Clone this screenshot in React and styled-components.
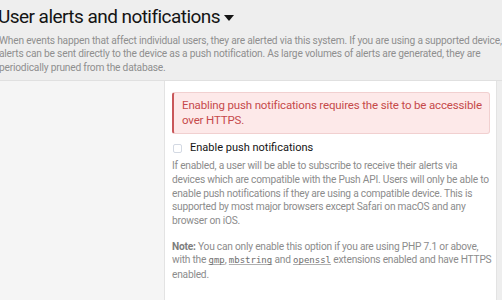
import React from "react";
import styled, { createGlobalStyle } from "styled-components";

const Global = createGlobalStyle`
  html, body { margin: 0; padding: 0; background: #eeeeee; overflow: hidden; }
  body { font-family: Roboto, "Noto Sans", sans-serif; }
`;

const Page = styled.div`
  width: 504px;
  margin-left: -2px;
  height: 300px;
  display: flex;
  flex-direction: column;
`;

const Header = styled.div`
  padding: 5px 0 0 0;
`;

const Title = styled.h1`
  margin: 0;
  font-weight: 400;
  font-size: 19px;
  letter-spacing: -0.55px;
  line-height: 24px;
  color: #141414;
  display: flex;
  align-items: center;
  gap: 4px;
  white-space: nowrap;
`;

const Caret = styled.span`
  width: 0;
  height: 0;
  border-left: 5px solid transparent;
  border-right: 5px solid transparent;
  border-top: 6px solid #141414;
  margin-top: 1px;
`;

const Desc = styled.p`
  margin: 5px 0 0 1px;
  font-size: 10.2px;
  letter-spacing: -0.2px;
  line-height: 13.4px;
  color: #8f8f8f;
  white-space: nowrap;
`;

const Form = styled.div`
  margin-top: 6px;
  display: grid;
  grid-template-columns: 166px 333px;
  border-top: 1px solid #e0e0e0;
  flex: 1;
`;

const LeftCol = styled.div`
  background: #f5f5f5;
`;

const RightCol = styled.div`
  background: #fff;
  border-left: 1px solid #e3e3e3;
  border-right: 1px solid #e3e3e3;
  padding: 11px 6px 0 7px;
`;

const Alert = styled.div`
  background: #fde9e9;
  border: 1px solid #f1d0d0;
  border-left: 2px solid #c9575a;
  border-radius: 3px;
  color: #c6494b;
  font-size: 11.5px;
  letter-spacing: -0.15px;
  line-height: 15px;
  padding: 5px 8px 5px 8px;
  white-space: nowrap;
`;

const CheckRow = styled.label`
  display: flex;
  align-items: center;
  gap: 8px;
  margin-top: 7px;
  font-size: 11px;
  line-height: 14px;
  color: #141414;
  padding-left: 1px;
`;

const Box = styled.span`
  width: 7px;
  height: 7px;
  border: 1px solid #d3d9e3;
  border-radius: 2px;
  background: #fff;
`;

const Help = styled.p`
  margin: ${(p) => p.$mt || 0}px 0 0 0;
  font-size: 10.2px;
  letter-spacing: -0.22px;
  line-height: 13.7px;
  color: #8c8c8c;
  white-space: nowrap;
`;

const Strong = styled.b`
  font-weight: 700;
  color: #7d7d7d;
`;

const Code = styled.code`
  font-family: "DejaVu Sans Mono", "Liberation Mono", monospace;
  font-size: 9px;
  letter-spacing: 0;
  color: #6d6d6d;
  text-decoration: underline;
  text-decoration-color: #b0b0b0;
`;

export default function App() {
  return (
    <>
      <Global />
      <Page>
        <Header>
          <Title>
            User alerts and notifications <Caret />
          </Title>
          <Desc>
            When events happen that affect individual users, they are alerted via this system. If you are using a supported device,
            <br />
            alerts can be sent directly to the device as a push notification. As large volumes of alerts are generated, they are
            <br />
            periodically pruned from the database.
          </Desc>
        </Header>
        <Form>
          <LeftCol />
          <RightCol>
            <Alert>
              Enabling push notifications requires the site to be accessible
              <br />
              over HTTPS.
            </Alert>
            <CheckRow>
              <Box />
              Enable push notifications
            </CheckRow>
            <Help $mt={4}>
              If enabled, a user will be able to subscribe to receive their alerts via
              <br />
              devices which are compatible with the Push API. Users will only be able to
              <br />
              enable push notifications if they are using a compatible device. This is
              <br />
              supported by most major browsers except Safari on macOS and any
              <br />
              browser on iOS.
            </Help>
            <Help $mt={12}>
              <Strong>Note:</Strong> You can only enable this option if you are using PHP 7.1 or above,
              <br />
              with the <Code>gmp</Code>, <Code>mbstring</Code> and <Code>openssl</Code> extensions enabled and have HTTPS
              <br />
              enabled.
            </Help>
          </RightCol>
        </Form>
      </Page>
    </>
  );
}
